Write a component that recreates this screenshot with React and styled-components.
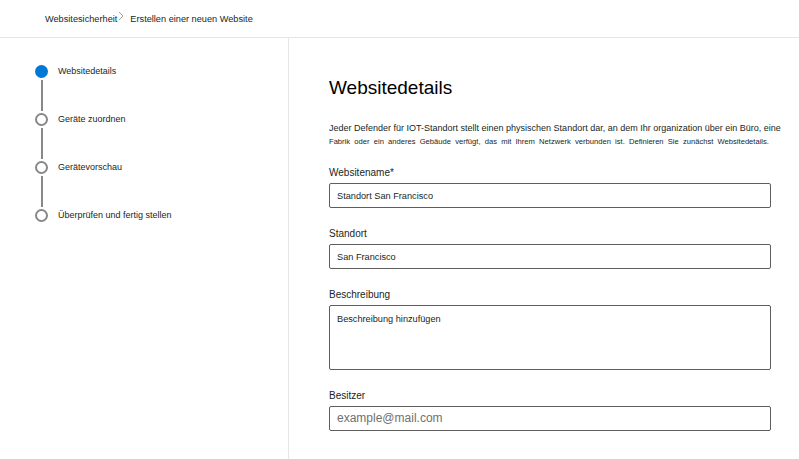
import React from "react";
import styled, { createGlobalStyle } from "styled-components";

// page reset and base font
const GlobalStyle = createGlobalStyle`
  html, body {
    margin: 0;
    padding: 0;
    background: #fff;
  }
  body {
    font-family: "Liberation Sans", Arial, sans-serif;
    color: #201f1e;
  }
`;

const Page = styled.div`
  width: 799px;
  height: 459px;
  display: flex;
  flex-direction: column;
  overflow: hidden;
  background: #fff;
`;

// top breadcrumb bar
const TopBar = styled.div`
  height: 37px;
  flex: none;
  display: flex;
  align-items: center;
  padding-left: 45px;
  border-bottom: 1px solid #e6e6e6;
  font-size: 9.2px;
  color: #201f1e;
`;

const Crumb = styled.span`
  white-space: nowrap;
`;

const CrumbSep = styled.svg`
  width: 6px;
  height: 10px;
  margin: 0 6px 0 1px;
  align-self: center;
  transform: translateY(-3px);
`;

const Body = styled.div`
  flex: 1;
  display: flex;
`;

// left wizard steps
const Nav = styled.nav`
  width: 289px;
  flex: none;
  border-right: 1px solid #e6e6e6;
  padding: 27px 0 0 35px;
  box-sizing: border-box;
`;

const Step = styled.div`
  display: grid;
  grid-template-columns: 13px 1fr;
  column-gap: 10px;
`;

const Dot = styled.span`
  width: 13px;
  height: 13px;
  box-sizing: border-box;
  border-radius: 50%;
  background: ${(p) => (p.$active ? "#0078d4" : "#fff")};
  border: ${(p) => (p.$active ? "none" : "2px solid #8a8886")};
`;

const StepLabel = styled.span`
  font-size: 9px;
  line-height: 13px;
  color: #201f1e;
  white-space: nowrap;
`;

const Connector = styled.span`
  width: 2px;
  height: 31px;
  margin: 2px auto;
  background: #8a8886;
`;

// right form area
const Content = styled.main`
  flex: 1;
  padding: 38px 0 0 40px;
  box-sizing: border-box;
`;

const Title = styled.h1`
  margin: 0;
  font-size: 19px;
  line-height: 24px;
  font-weight: 400;
  color: #000;
`;

const Intro = styled.p`
  margin: 21px 0 0;
  width: 460px;
  font-size: 9px;
  line-height: 14px;
  color: #201f1e;
`;

const IntroLine = styled.span`
  display: block;
  white-space: nowrap;
  font-size: ${(p) => p.$size || "inherit"};
  word-spacing: ${(p) => p.$spacing || "normal"};
`;

const Form = styled.form`
  margin-top: 17px;
  display: flex;
  flex-direction: column;
  gap: 19px;
`;

const Field = styled.div`
  display: flex;
  flex-direction: column;
  gap: 3px;
`;

const Label = styled.label`
  font-size: 10px;
  line-height: 14px;
  color: #201f1e;
`;

const Input = styled.input`
  width: 442px;
  height: 25px;
  box-sizing: border-box;
  border: 1px solid #605e5c;
  border-radius: 2px;
  padding: 0 7px;
  font-family: "Liberation Sans", Arial, sans-serif;
  font-size: 9.2px;
  color: #201f1e;
  outline: none;

  &::placeholder {
    font-size: 12px;
    color: #707070;
  }
`;

const TextArea = styled.textarea`
  width: 442px;
  height: 65px;
  box-sizing: border-box;
  border: 1px solid #605e5c;
  border-radius: 2px;
  padding: 8px 7px;
  font-family: "Liberation Sans", Arial, sans-serif;
  font-size: 9.2px;
  color: #201f1e;
  resize: none;
  outline: none;
`;

const steps = [
  "Websitedetails",
  "Geräte zuordnen",
  "Gerätevorschau",
  "Überprüfen und fertig stellen",
];

export default function App() {
  return (
    <>
      <GlobalStyle />
      <Page>
        <TopBar>
          <Crumb>Websitesicherheit</Crumb>
          <CrumbSep viewBox="0 0 6 10">
            <path d="M1 1l4 4-4 4" fill="none" stroke="#8a8886" strokeWidth="0.8" />
          </CrumbSep>
          <Crumb>Erstellen einer neuen Website</Crumb>
        </TopBar>
        <Body>
          <Nav>
            {steps.map((s, i) => (
              <React.Fragment key={s}>
                <Step>
                  <Dot $active={i === 0} />
                  <StepLabel>{s}</StepLabel>
                </Step>
                {i < steps.length - 1 && (
                  <Step>
                    <Connector />
                  </Step>
                )}
              </React.Fragment>
            ))}
          </Nav>
          <Content>
            <Title>Websitedetails</Title>
            <Intro>
              <IntroLine>
                Jeder Defender für IOT-Standort stellt einen physischen Standort dar, an dem Ihr organization über ein Büro, eine
              </IntroLine>
              <IntroLine $size="7.6px" $spacing="2.1px">
                Fabrik oder ein anderes Gebäude verfügt, das mit Ihrem Netzwerk verbunden ist. Definieren Sie zunächst Websitedetails.
              </IntroLine>
            </Intro>
            <Form onSubmit={(e) => e.preventDefault()}>
              <Field>
                <Label>Websitename*</Label>
                <Input defaultValue="Standort San Francisco" />
              </Field>
              <Field>
                <Label>Standort</Label>
                <Input defaultValue="San Francisco" />
              </Field>
              <Field>
                <Label>Beschreibung</Label>
                <TextArea defaultValue="Beschreibung hinzufügen" />
              </Field>
              <Field>
                <Label>Besitzer</Label>
                <Input placeholder="example@mail.com" />
              </Field>
            </Form>
          </Content>
        </Body>
      </Page>
    </>
  );
}
